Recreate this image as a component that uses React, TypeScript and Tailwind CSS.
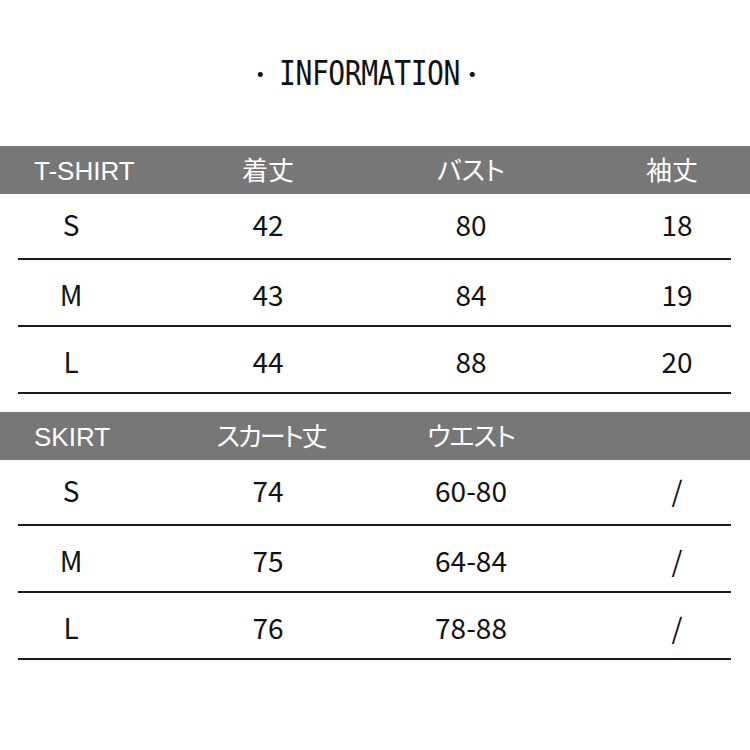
import React from "react";

const jp = "font-['Liberation_Sans','Noto_Sans_CJK_JP',sans-serif] [font-feature-settings:'palt']";
const num = "font-['Noto_Sans_CJK_JP',sans-serif]";

function Header({ cells }: { cells: string[] }) {
  return (
    <div className="h-[48px] bg-[#777777] grid grid-cols-[140px_256px_150px_204px] items-center text-white text-[26px] leading-none">
      <div className={`${jp} pl-[34px] pt-[2px]`}>{cells[0]}</div>
      <div className={`${jp} text-center pt-[2px] ${cells[1].length > 3 ? "tracking-[-2px] pl-[6px]" : ""}`}>{cells[1]}</div>
      <div className={`${jp} text-center pt-[2px] ${cells[2] === "ウエスト" ? "tracking-[-1px]" : ""}`}>{cells[2]}</div>
      <div className={`${jp} text-center pl-[48px] pt-[2px]`}>{cells[3]}</div>
    </div>
  );
}

function Row({ cells, first }: { cells: string[]; first?: boolean }) {
  return (
    <div className="mx-[18px] w-[713px] border-b-2 border-[#1a1a1a]">
      <div
        className={`grid grid-cols-[106px_288px_118px_201px] items-center text-[28px] leading-[30px] text-[#111] ${num} ${
          first ? "h-[64px] pb-[4px]" : "h-[65px] pt-[2px]"
        }`}
      >
        <div className="text-center">{cells[0]}</div>
        <div className="text-center">{cells[1]}</div>
        <div className="text-center">{cells[2]}</div>
        <div className="text-center pl-[93px]">{cells[3]}</div>
      </div>
    </div>
  );
}

export default function App() {
  return (
    <div className="w-[750px] h-[750px] bg-white overflow-hidden">
      <div className="h-[146px] pt-[56px]">
        <div className="flex justify-center items-center text-[#111] font-['DejaVu_Sans_Mono',monospace] text-[28px] leading-[32px] tracking-[-0.4px] pr-[18px]">
          <span className="font-['Noto_Sans_CJK_JP',sans-serif] text-[24px] w-[24px] text-center">・</span>
          <span className="scale-y-[1.18] inline-block ml-[7px] pt-[2px]">INFORMATION</span>
          <span className="font-['Noto_Sans_CJK_JP',sans-serif] text-[24px] w-[24px] text-center">・</span>
        </div>
      </div>

      <Header cells={["T-SHIRT", "着丈", "バスト", "袖丈"]} />
      <Row first cells={["S", "42", "80", "18"]} />
      <Row cells={["M", "43", "84", "19"]} />
      <Row cells={["L", "44", "88", "20"]} />

      <div className="h-[18px]" />

      <Header cells={["SKIRT", "スカート丈", "ウエスト", ""]} />
      <Row first cells={["S", "74", "60-80", "/"]} />
      <Row cells={["M", "75", "64-84", "/"]} />
      <Row cells={["L", "76", "78-88", "/"]} />
    </div>
  );
}
